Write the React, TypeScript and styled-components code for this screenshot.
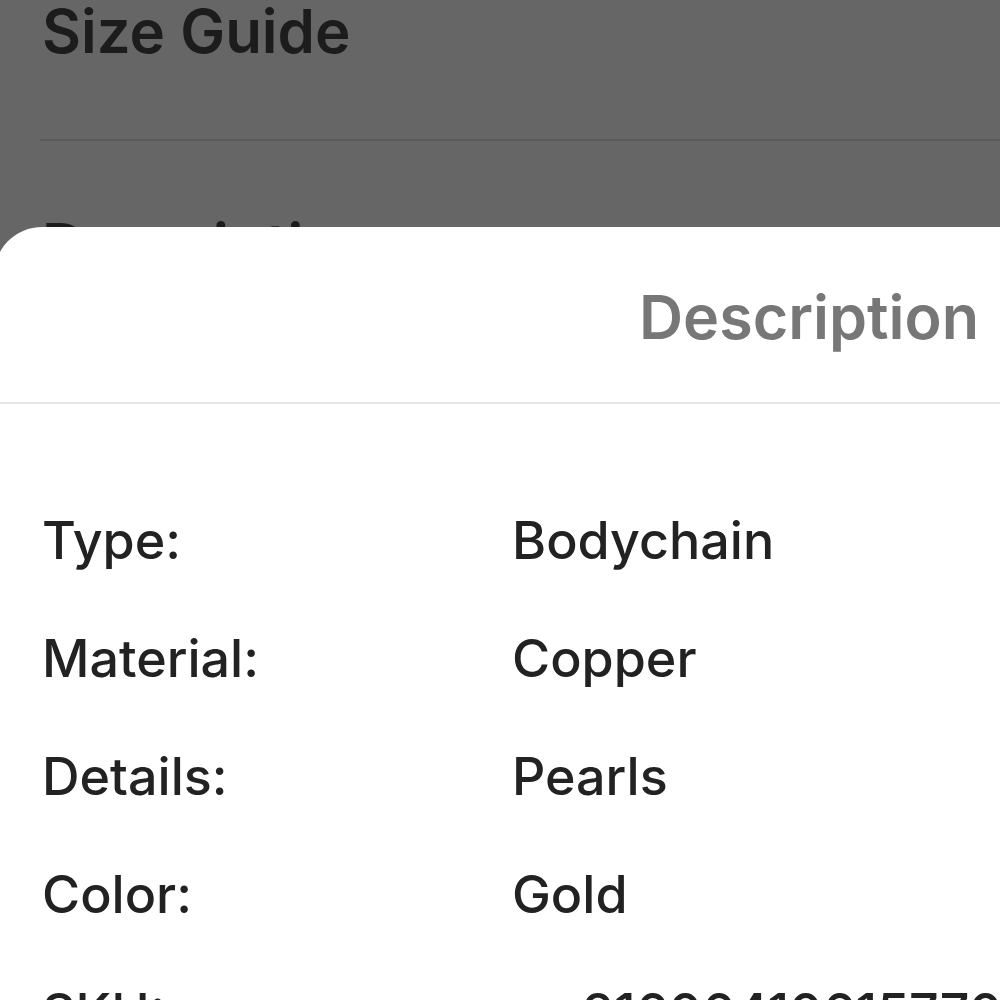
import styled, { createGlobalStyle } from "styled-components";

const GlobalStyle = createGlobalStyle`
  html, body {
    margin: 0;
    padding: 0;
    background: #666666;
    font-family: Inter, "Noto Sans", "Liberation Sans", sans-serif;
    -webkit-font-smoothing: antialiased;
  }
`;

type Spec = { label: string; value: string; indent?: number };

const specs: Spec[] = [
  { label: "Type:", value: "Bodychain" },
  { label: "Material:", value: "Copper" },
  { label: "Details:", value: "Pearls" },
  { label: "Color:", value: "Gold" },
  { label: "SKU:", value: "2160641061577050", indent: 70 },
];

export default function App() {
  return (
    <>
      <GlobalStyle />
      <Screen>
        <PageList>
          <PageItem>Size Guide</PageItem>
          <PageDivider />
          <PageItem $gap={68}>Description</PageItem>
        </PageList>

        <Sheet>
          <SheetHeader>
            <SheetTitle>Description</SheetTitle>
          </SheetHeader>
          <SpecTable>
            {specs.map((s) => (
              <SpecRow key={s.label}>
                <SpecLabel>{s.label}</SpecLabel>
                <SpecValue $indent={s.indent ?? 0}>{s.value}</SpecValue>
              </SpecRow>
            ))}
          </SpecTable>
        </Sheet>
      </Screen>
    </>
  );
}

const Screen = styled.div`
  position: relative;
  width: 1000px;
  height: 1000px;
  overflow: hidden;
  background: #666666;
`;

// product page behind the dimmed overlay
const PageList = styled.div`
  display: flex;
  flex-direction: column;
  padding-left: 40px;
  margin-top: -5px;
`;

const PageItem = styled.div<{ $gap?: number }>`
  padding-left: 2px;
  margin-top: ${(p) => p.$gap ?? 0}px;
  font-size: 60px;
  line-height: 72px;
  font-weight: 600;
  color: #1c1c1c;
  white-space: nowrap;
`;

const PageDivider = styled.div`
  height: 2px;
  margin-top: 72px;
  background: #595959;
`;

const Sheet = styled.div`
  position: absolute;
  top: 227px;
  left: -6px;
  right: -60px;
  bottom: 0;
  background: #ffffff;
  border-top-left-radius: 48px;
  border-top-right-radius: 48px;
`;

const SheetHeader = styled.div`
  display: flex;
  align-items: center;
  justify-content: flex-end;
  height: 175px;
  padding-right: 81px;
  border-bottom: 2px solid #e6e6e6;
`;

const SheetTitle = styled.div`
  font-size: 61px;
  line-height: 72px;
  font-weight: 600;
  color: #777777;
  margin-top: 4px;
`;

const SpecTable = styled.div`
  display: flex;
  flex-direction: column;
  padding: 78px 0 0 48px;
`;

const SpecRow = styled.div`
  display: grid;
  grid-template-columns: 470px 1fr;
  font-size: 52px;
  line-height: 118px;
  font-weight: 500;
  color: #222222;
  white-space: nowrap;
`;

const SpecLabel = styled.div``;

const SpecValue = styled.div<{ $indent: number }>`
  padding-left: ${(p) => p.$indent}px;
`;
